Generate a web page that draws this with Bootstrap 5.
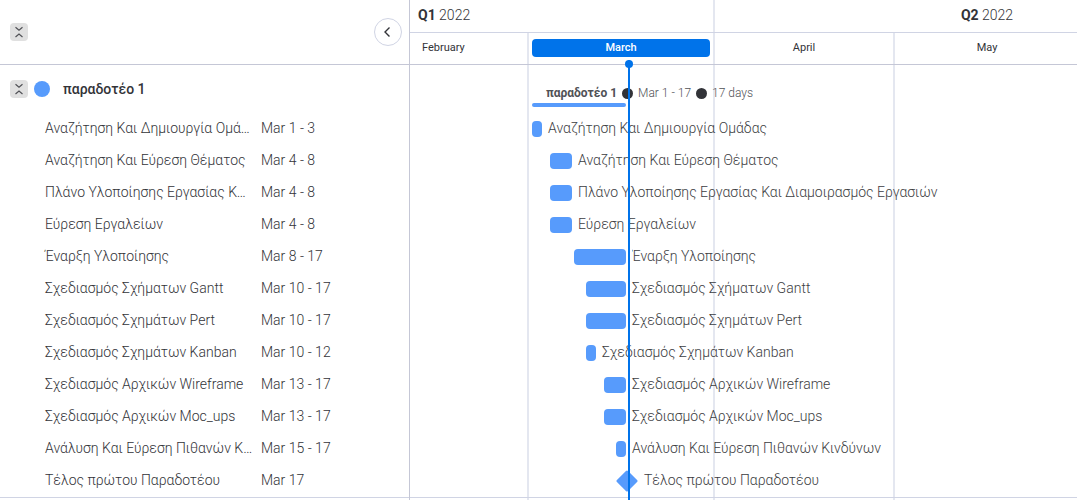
<!DOCTYPE html>
<html lang="el">
<head>
<meta charset="utf-8">
<meta name="viewport" content="width=device-width, initial-scale=1">
<title>Gantt</title>
<link href="https://cdn.jsdelivr.net/npm/bootstrap@5.3.0/dist/css/bootstrap.min.css" rel="stylesheet">
<style>
  :root { --line: #c5c7d6; --grid: #e4e7f0; --bar: #579bfc; --accent: #0073ea; --ink: #323338; }
  body { font-family: Roboto, "Open Sans", sans-serif; font-size: 14px; line-height: 20px; color: var(--ink); background: #fff; }
  .side-panel { flex: 0 0 410px; border-right: 1px solid var(--line); }
  .side-pad { padding: 0 7px 0 10px; }
  .head-area { height: 65px; border-bottom: 1px solid var(--line); }
  .group-area { height: 48px; }
  .toggle-btn { width: 18px; height: 18px; border: 0; border-radius: 4px; background: #e0e0e0; }
  .back-btn { width: 28px; height: 28px; border: 1px solid #d0d4e4; background: #fff; }
  .group-dot { width: 16px; height: 16px; margin: 0 13px 0 6px; background: var(--bar); }
  .group-name { font-weight: 500; }
  .task-table { table-layout: fixed; border-bottom: 1px solid #d0d4e4; }
  .task-table td { height: 32px; padding: 0 8px 2px 0; font-weight: 300; vertical-align: middle; }
  .task-table td:first-child { width: 261px; padding-left: 45px; }
  .timeline { min-width: 0; }
  .months { display: grid; grid-template-columns: 117px 186px 180px 186px 180px; }
  .quarters { display: grid; grid-template-columns: 303px 546px; height: 33px; border-bottom: 1px solid #d0d4e4; font-weight: 300; }
  .quarters > * { padding: 5px 8px; }
  .quarters b { font-weight: 700; }
  .months > * + *, .quarters > * + * { border-left: 2px solid var(--grid); }
  .month-names { height: 31px; font-size: 11px; }
  .month-names > * { padding: 0 3px 2px; }
  .month-names > :first-child { padding-left: 12px; }
  .now-pill { background: var(--accent); border-radius: 4px; height: 18px; line-height: 18px; font-weight: 500; }
  .group-title { gap: 5px; margin-left: 136px; font-size: 12px; font-weight: 300; line-height: 14px; color: #505156; }
  .group-title b { font-weight: 700; }
  .title-dot { width: 11px; height: 11px; background: var(--ink); }
  .group-bar { height: 4px; margin: 3px 0 6px; border-radius: 2px; background: var(--bar); }
  .task-line { height: 32px; gap: 6px; }
  .task-bar { height: 16px; border-radius: 4px; background: var(--bar); }
  .task-name { padding-bottom: 2px; font-weight: 300; color: #3c3d42; }
  .chart-rows { border-bottom: 1px solid #d0d4e4; }
  .today-line { left: 218px; top: 60px; bottom: 0; width: 2px; background: var(--accent); }
  .today-line::before { content: ""; position: absolute; left: -3px; top: 0; width: 8px; height: 8px; border-radius: 50%; background: var(--accent); }
</style>
</head>
<body>
<div class="d-flex min-vh-100 overflow-hidden">
  <section class="side-panel">
    <header class="head-area side-pad d-flex align-items-center justify-content-between">
      <button class="toggle-btn p-0 d-flex" type="button" aria-label="Collapse all">
        <svg width="18" height="18" viewBox="0 0 18 18" fill="none" stroke="#505156" stroke-width="1.2"><path d="M5.500 4.200 9 7.200l3.500-3M5.500 14 9 11l3.500 3"/></svg>
      </button>
      <button class="back-btn rounded-circle p-0 d-flex align-items-center justify-content-center" type="button" aria-label="Hide list">
        <svg width="12" height="12" viewBox="0 0 12 12" fill="none" stroke="#323338" stroke-width="1.4"><path d="M7.500 1.500 3 6l4.500 4.500"/></svg>
      </button>
    </header>
    <div class="group-area side-pad d-flex align-items-center">
      <button class="toggle-btn p-0 d-flex" type="button" aria-label="Collapse group">
        <svg width="18" height="18" viewBox="0 0 18 18" fill="none" stroke="#505156" stroke-width="1.2"><path d="M5.500 4.200 9 7.200l3.500-3M5.500 14 9 11l3.500 3"/></svg>
      </button>
      <span class="group-dot rounded-circle"></span>
      <span class="group-name">παραδοτέο 1</span>
    </div>
    <table class="task-table w-100">
      <tbody>
        <tr><td class="text-truncate">Αναζήτηση Και Δημιουργία Ομάδας</td><td>Mar 1 - 3</td></tr>
        <tr><td class="text-truncate">Αναζήτηση Και Εύρεση Θέματος</td><td>Mar 4 - 8</td></tr>
        <tr><td class="text-truncate">Πλάνο Υλοποίησης Εργασίας Και Διαμοιρασμός Εργασιών</td><td>Mar 4 - 8</td></tr>
        <tr><td class="text-truncate">Εύρεση Εργαλείων</td><td>Mar 4 - 8</td></tr>
        <tr><td class="text-truncate">Έναρξη Υλοποίησης</td><td>Mar 8 - 17</td></tr>
        <tr><td class="text-truncate">Σχεδιασμός Σχήματων Gantt</td><td>Mar 10 - 17</td></tr>
        <tr><td class="text-truncate">Σχεδιασμός Σχημάτων Pert</td><td>Mar 10 - 17</td></tr>
        <tr><td class="text-truncate">Σχεδιασμός Σχημάτων Kanban</td><td>Mar 10 - 12</td></tr>
        <tr><td class="text-truncate">Σχεδιασμός Αρχικών Wireframe</td><td>Mar 13 - 17</td></tr>
        <tr><td class="text-truncate">Σχεδιασμός Αρχικών Moc_ups</td><td>Mar 13 - 17</td></tr>
        <tr><td class="text-truncate">Ανάλυση Και Εύρεση Πιθανών Κινδύνων</td><td>Mar 15 - 17</td></tr>
        <tr><td class="text-truncate">Τέλος πρώτου Παραδοτέου</td><td>Mar 17</td></tr>
      </tbody>
    </table>
  </section>

  <section class="timeline flex-grow-1 position-relative overflow-hidden">
    <div class="months position-absolute top-0 bottom-0 start-0" aria-hidden="true"><i></i><i></i><i></i><i></i><i></i></div>
    <header class="head-area position-relative bg-white">
      <div class="quarters">
        <div><b>Q1</b> 2022</div>
        <div class="text-center"><b>Q2</b> 2022</div>
      </div>
      <div class="months month-names">
        <div class="d-flex align-items-center">February</div>
        <div class="d-flex align-items-center"><span class="now-pill flex-grow-1 text-white text-center">March</span></div>
        <div class="d-flex align-items-center justify-content-center">April</div>
        <div class="d-flex align-items-center justify-content-center">May</div>
        <div class="d-flex align-items-center justify-content-center">June</div>
      </div>
    </header>
    <div class="chart-rows position-relative text-nowrap">
      <div class="group-area d-flex flex-column justify-content-end">
        <div class="group-title d-flex align-items-center"><b>παραδοτέο 1</b><span class="title-dot rounded-circle"></span><span>Mar 1 - 17</span><span class="title-dot rounded-circle"></span><span>17 days</span></div>
        <div class="group-bar" style="margin-left:122px;width:94px"></div>
      </div>
      <div class="task-line d-flex align-items-center" style="padding-left:122px"><span class="task-bar" style="width:10px"></span><span class="task-name">Αναζήτηση Και Δημιουργία Ομάδας</span></div>
      <div class="task-line d-flex align-items-center" style="padding-left:140px"><span class="task-bar" style="width:22px"></span><span class="task-name">Αναζήτηση Και Εύρεση Θέματος</span></div>
      <div class="task-line d-flex align-items-center" style="padding-left:140px"><span class="task-bar" style="width:22px"></span><span class="task-name">Πλάνο Υλοποίησης Εργασίας Και Διαμοιρασμός Εργασιών</span></div>
      <div class="task-line d-flex align-items-center" style="padding-left:140px"><span class="task-bar" style="width:22px"></span><span class="task-name">Εύρεση Εργαλείων</span></div>
      <div class="task-line d-flex align-items-center" style="padding-left:164px"><span class="task-bar" style="width:52px"></span><span class="task-name overflow-hidden">Έναρξη Υλοποίησης</span></div>
      <div class="task-line d-flex align-items-center" style="padding-left:176px"><span class="task-bar" style="width:40px"></span><span class="task-name">Σχεδιασμός Σχήματων Gantt</span></div>
      <div class="task-line d-flex align-items-center" style="padding-left:176px"><span class="task-bar" style="width:40px"></span><span class="task-name">Σχεδιασμός Σχημάτων Pert</span></div>
      <div class="task-line d-flex align-items-center" style="padding-left:176px"><span class="task-bar" style="width:10px"></span><span class="task-name">Σχεδιασμός Σχημάτων Kanban</span></div>
      <div class="task-line d-flex align-items-center" style="padding-left:194px"><span class="task-bar" style="width:22px"></span><span class="task-name">Σχεδιασμός Αρχικών Wireframe</span></div>
      <div class="task-line d-flex align-items-center" style="padding-left:194px"><span class="task-bar" style="width:22px"></span><span class="task-name">Σχεδιασμός Αρχικών Moc_ups</span></div>
      <div class="task-line d-flex align-items-center" style="padding-left:206px"><span class="task-bar" style="width:10px"></span><span class="task-name">Ανάλυση Και Εύρεση Πιθανών Κινδύνων</span></div>
      <div class="task-line d-flex align-items-center" style="padding-left:206px"><svg width="22" height="22" viewBox="0 0 22 22" aria-hidden="true"><path d="M11 2 20 11 11 20 2 11Z" fill="#579bfc" stroke="#579bfc" stroke-width="3" stroke-linejoin="round"/></svg><span class="task-name">Τέλος πρώτου Παραδοτέου</span></div>
    </div>
    <div class="today-line position-absolute"></div>
  </section>
</div>
<script src="https://cdn.jsdelivr.net/npm/bootstrap@5.3.0/dist/js/bootstrap.bundle.min.js"></script>
</body>
</html>
